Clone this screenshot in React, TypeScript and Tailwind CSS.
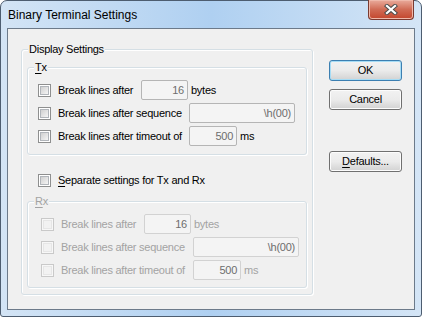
import React from "react";

function CheckBox({ disabled }: { disabled?: boolean }) {
  return (
    <span
      className={`flex h-[13px] w-[13px] shrink-0 items-center justify-center border ${
        disabled ? "border-[#c9c9c9] bg-[#f7f7f7]" : "border-[#8e8f8f] bg-white"
      }`}
    >
      <span
        className={`h-[9px] w-[9px] border ${
          disabled
            ? "border-[#e6e6e6] bg-[#f2f2f2]"
            : "border-[#b1b5ba] bg-linear-to-br from-[#d0d0d0] to-[#f5f5f5]"
        }`}
      />
    </span>
  );
}

function SettingRow({
  label,
  labelW,
  value,
  inputW,
  unit,
  disabled,
}: {
  label: string;
  labelW: string;
  value: string;
  inputW: string;
  unit?: string;
  disabled?: boolean;
}) {
  return (
    <div className="flex h-[20px] items-center">
      <CheckBox disabled={disabled} />
      <span
        className={`ml-[7px] shrink-0 whitespace-nowrap ${labelW} ${
          disabled ? "text-[#a3a3a3]" : "text-black"
        }`}
      >
        {label}
      </span>
      <span
        className={`flex h-[20px] shrink-0 items-center justify-end rounded-[2px] border bg-[#f4f4f4] pr-[3px] text-[#6d6d6d] ${inputW} ${
          disabled ? "border-[#d2d2d2]" : "border-[#b5b5b5]"
        }`}
      >
        {value}
      </span>
      {unit && (
        <span className={`ml-[3px] ${disabled ? "text-[#a3a3a3]" : "text-black"}`}>{unit}</span>
      )}
    </div>
  );
}

function GroupBox({
  title,
  className,
  disabled,
  children,
}: {
  title: React.ReactNode;
  className: string;
  disabled?: boolean;
  children?: React.ReactNode;
}) {
  return (
    <div
      className={`relative rounded-[3px] border border-[#d5dfe5] shadow-[1px_1px_0_#ffffff,inset_1px_1px_0_#ffffff] ${className}`}
    >
      <span
        className={`absolute -top-[8px] left-[6px] bg-[#f0f0f0] px-[1px] leading-[14px] ${
          disabled ? "text-[#a3a3a3]" : "text-black"
        }`}
      >
        {title}
      </span>
      {children}
    </div>
  );
}

function Button({ children, isDefault }: { children: React.ReactNode; isDefault?: boolean }) {
  return (
    <div
      className={`flex h-[21px] w-[73px] items-center justify-center rounded-[3px] border bg-linear-to-b from-[#f2f2f2] via-[#ebebeb] to-[#d2d2d2] text-black ${
        isDefault
          ? "border-[#3c7fb1] shadow-[inset_0_0_0_1px_#a6dcf5]"
          : "border-[#707070] shadow-[inset_0_0_0_1px_#fcfcfc]"
      }`}
    >
      {children}
    </div>
  );
}

export default function App() {
  return (
    <div className="h-[317px] w-[422px] overflow-hidden bg-white font-['Liberation_Sans',Arial,sans-serif] text-[11px] tracking-[-0.25px]">
      <div className="flex h-full w-full flex-col rounded-t-[7px] rounded-b-[3px] border border-[#4d5d70] bg-linear-to-r from-[#d3e4f5] via-[#afd0f1] to-[#d4e5f6]">
        {/* Title bar */}
        <div className="flex h-[27px] shrink-0 items-start justify-between">
          <span className="ml-[7px] mt-[6px] text-[12px] leading-[16px] tracking-normal text-black">
            Binary Terminal Settings
          </span>
          <div className="mr-[7px] -mt-[1px] flex h-[20px] w-[46px] items-center justify-center rounded-b-[4px] border border-t-0 border-[#7a3a30] bg-linear-to-b from-[#e9ab9c] via-[#d06b55] to-[#c3452c] shadow-[inset_0_0_0_1px_#efb9ab]">
            <svg width="14" height="11" viewBox="0 0 14 11">
              <path d="M3 2 L11 9 M11 2 L3 9" stroke="#4b4b4b" strokeWidth="4.2" strokeLinecap="square" />
              <path d="M3 2 L11 9 M11 2 L3 9" stroke="#ffffff" strokeWidth="2.3" strokeLinecap="square" />
            </svg>
          </div>
        </div>

        {/* Client area */}
        <div className="ml-[6px] flex h-[282px] w-[408px] shrink-0 border border-[#6c7a8a] bg-[#f0f0f0]">
          <GroupBox title="Display Settings" className="ml-[13px] mt-[20px] h-[246px] w-[292px] px-[5px] pt-[17px]">
            <GroupBox
              title={
                <>
                  <u className="underline-offset-[2px]">T</u>x
                </>
              }
              className="h-[88px] w-[280px] pl-[10px] pt-[12px]"
            >
              <div className="flex flex-col gap-[3px]">
                <SettingRow label="Break lines after" labelW="w-[83px]" value="16" inputW="w-[47px]" unit="bytes" />
                <SettingRow label="Break lines after sequence" labelW="w-[131px]" value="\h(00)" inputW="w-[106px]" />
                <SettingRow label="Break lines after timeout of" labelW="w-[131px]" value="500" inputW="w-[48px]" unit="ms" />
              </div>
            </GroupBox>

            <div className="ml-[11px] mt-[15px] flex h-[20px] items-center">
              <CheckBox />
              <span className="ml-[7px] text-black">
                <u className="underline-offset-[2px]">S</u>eparate settings for Tx and Rx
              </span>
            </div>

            <GroupBox
              disabled
              title={
                <>
                  <u className="underline-offset-[2px]">R</u>x
                </>
              }
              className="mt-[11px] h-[87px] w-[280px] pl-[13px] pt-[12px]"
            >
              <div className="flex flex-col gap-[3px]">
                <SettingRow disabled label="Break lines after" labelW="w-[83px]" value="16" inputW="w-[47px]" unit="bytes" />
                <SettingRow disabled label="Break lines after sequence" labelW="w-[132px]" value="\h(00)" inputW="w-[106px]" />
                <SettingRow disabled label="Break lines after timeout of" labelW="w-[132px]" value="500" inputW="w-[48px]" unit="ms" />
              </div>
            </GroupBox>
          </GroupBox>

          <div className="ml-[16px] mt-[31px] flex flex-col">
            <Button isDefault>OK</Button>
            <div className="mt-[8px]">
              <Button>Cancel</Button>
            </div>
            <div className="mt-[41px]">
              <Button>
                <span>
                  <u className="underline-offset-[2px]">D</u>efaults...
                </span>
              </Button>
            </div>
          </div>
        </div>
      </div>
    </div>
  );
}
